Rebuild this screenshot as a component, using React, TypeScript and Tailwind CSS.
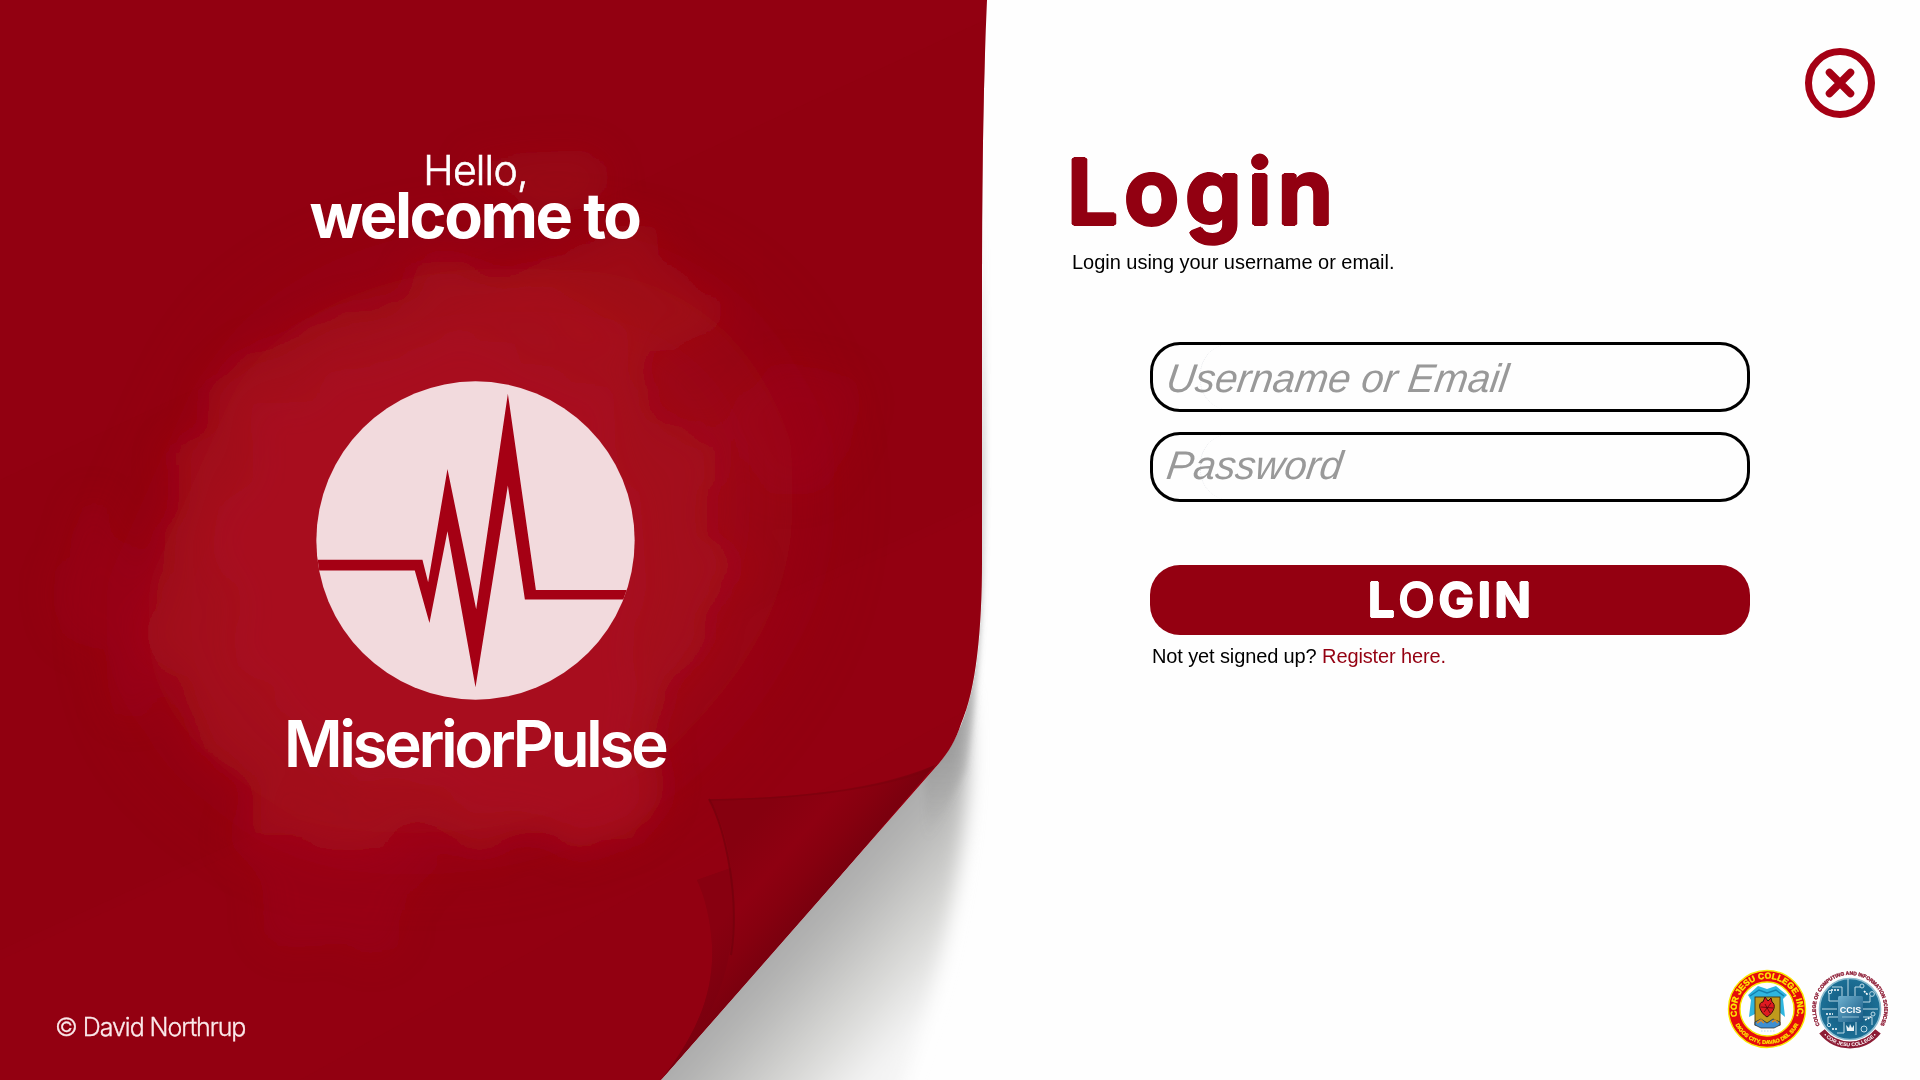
import React from "react";

function Backdrop() {
  return (
    <svg className="absolute inset-0 h-full w-full" viewBox="0 0 1920 1080" aria-hidden="true">
      <defs>
        <clipPath id="sheet">
          <path d="M0 0H987C983 90 982 190 982 300V560C982 630 976 690 961 724C955 742 947 755 935 768L661 1080H0Z" />
        </clipPath>
        <clipPath id="page">
          <path d="M987 0H1920V1080H661L935 768C975 725 982 650 982 560V300Z" />
        </clipPath>
        <filter id="b3" x="-50%" y="-50%" width="200%" height="200%"><feGaussianBlur stdDeviation="3" /></filter>
        <filter id="b10" x="-50%" y="-50%" width="200%" height="200%"><feGaussianBlur stdDeviation="9" /></filter>
        <filter id="cloud" x="-30%" y="-30%" width="160%" height="160%">
          <feTurbulence type="fractalNoise" baseFrequency="0.008" numOctaves="3" seed="7" result="n" />
          <feDisplacementMap in="SourceGraphic" in2="n" scale="120" xChannelSelector="R" yChannelSelector="G" />
          <feGaussianBlur stdDeviation="17" />
        </filter>
        <filter id="b45" x="-50%" y="-50%" width="200%" height="200%"><feGaussianBlur stdDeviation="45" /></filter>
        <linearGradient id="shade" gradientUnits="userSpaceOnUse" x1="798" y1="924" x2="916" y2="1028">
          <stop offset="0" stopColor="#acacac" />
          <stop offset="0.2" stopColor="#b8b8b7" />
          <stop offset="0.6" stopColor="#d6d6d4" />
          <stop offset="1" stopColor="#f4f4f4" />
        </linearGradient>
        <linearGradient id="fold" gradientUnits="userSpaceOnUse" x1="722" y1="858" x2="798" y2="924">
          <stop offset="0" stopColor="#86000f" />
          <stop offset="0.45" stopColor="#8e0011" />
          <stop offset="0.72" stopColor="#86000f" />
          <stop offset="1" stopColor="#7a000e" />
        </linearGradient>
        <linearGradient id="fold2" gradientUnits="userSpaceOnUse" x1="690" y1="960" x2="740" y2="1000">
          <stop offset="0" stopColor="#880010" />
          <stop offset="1" stopColor="#78000e" />
        </linearGradient>
        <linearGradient id="edge" gradientUnits="userSpaceOnUse" x1="0" y1="200" x2="0" y2="840">
          <stop offset="0" stopColor="#777" stopOpacity="0" />
          <stop offset="0.4" stopColor="#777" stopOpacity="0.5" />
          <stop offset="0.75" stopColor="#777" stopOpacity="0.5" />
          <stop offset="1" stopColor="#777" stopOpacity="0" />
        </linearGradient>
      </defs>
      <rect width="1920" height="1080" fill="#fefefe" />
      <g clipPath="url(#page)">
        <path d="M600 1120L880 745L948 700L966 690C974 780 962 860 948 925C935 990 918 1040 890 1120Z" fill="url(#shade)" filter="url(#b10)" />
        <path d="M981 200H984C985 450 988 640 966 770L925 850V760C985 700 981 600 981 200Z" fill="url(#edge)" filter="url(#b3)" />
      </g>
      <g clipPath="url(#sheet)">
        <rect width="1000" height="1080" fill="#920011" />
        <path d="M0 480L985 20V500L0 950Z" fill="#8f000f" opacity="0.5" />
        <path d="M0 960L985 510V700L300 1080H0Z" fill="#960012" opacity="0.35" />
        <path d="M230 400C280 300 420 260 530 270C690 260 760 350 790 440C810 600 740 680 660 760C560 830 420 850 300 820C200 760 130 700 150 580Z" fill="#a60f1a" opacity="0.55" filter="url(#b45)" />
        <g fill="#ac161f" filter="url(#cloud)">
          <path d="M190 400C250 340 350 280 430 285C560 270 650 310 660 390C700 440 750 480 740 570C700 610 680 680 670 770C600 850 500 870 390 850C330 870 260 850 250 790C180 730 130 700 145 640C180 590 150 560 160 500Z" opacity="0.5" />
          <path d="M250 430C330 350 450 340 540 370C620 400 640 470 640 540C630 640 650 740 620 830C500 860 330 800 280 700C200 640 210 520 250 430Z" opacity="0.5" />
          <path d="M600 235C650 220 700 240 715 300C700 340 660 320 650 360L450 330Z" opacity="0.35" />
          <ellipse cx="550" cy="175" rx="60" ry="32" opacity="0.25" />
          <ellipse cx="115" cy="620" rx="45" ry="110" opacity="0.18" />
          <ellipse cx="790" cy="430" rx="70" ry="50" opacity="0.18" />
          <path d="M240 800L440 840L370 960L290 970Z" opacity="0.2" />
        </g>
        <path d="M709 799C770 799 870 793 935 765L790 935L661 1080C700 1030 714 990 712 945C710 915 704 895 697 880L731 868C727 840 720 815 709 799Z" fill="url(#fold)" />
        <path d="M697 880L731 868C735 900 735 930 728 960C722 990 712 1010 690 1047L661 1080C700 1030 714 990 712 945C710 915 704 895 697 880Z" fill="url(#fold2)" />
        <path d="M709 799C726 830 740 900 731 955" fill="none" stroke="#70000c" strokeWidth="2" opacity="0.65" />
        <path d="M709 800C780 799 870 793 934 768" fill="none" stroke="#79000d" strokeWidth="1.5" opacity="0.6" />
      </g>
    </svg>
  );
}

function PulseMark() {
  return (
    <svg className="h-[319px] w-[319px]" viewBox="168 62 956 956" aria-hidden="true">
      <defs><clipPath id="disc"><circle cx="646" cy="540" r="477" /></clipPath></defs>
      <circle cx="646" cy="540" r="477" fill="#f2dadd" />
      <path clipPath="url(#disc)" fill="#a50014" d="M160 598H487L504 665L562 326L648 746L743 100L827 688H1130V717H794L743 375L646 980L562 512L508 787L464 630H160Z" />
    </svg>
  );
}

function CollegeSeal() {
  return (
    <svg className="h-[80px] w-[80px]" viewBox="-40 -40 80 80" aria-label="Cor Jesu College">
      <defs>
        <path id="sealTop" d="M-27.5 13A30.4 30.4 0 1 1 27.5 13" />
        <path id="sealBottom" d="M-34.5 6A35 35 0 0 0 34.5 6" />
      </defs>
      <circle r="38.5" fill="#e60c0c" stroke="#f8e900" strokeWidth="1.4" />
      <circle r="27" fill="#fefefe" stroke="#f8e900" strokeWidth="1.4" />
      <text fontFamily="Liberation Sans, sans-serif" fontWeight="700" fontSize="8.6" fill="#fdf000" stroke="#fdf000" strokeWidth="0.3">
        <textPath href="#sealTop" startOffset="50%" textAnchor="middle">COR JESU COLLEGE, INC.</textPath>
      </text>
      <text fontFamily="Liberation Sans, sans-serif" fontWeight="700" fontSize="5.4" fill="#fdf000" stroke="#fdf000" strokeWidth="0.2">
        <textPath href="#sealBottom" startOffset="50%" textAnchor="middle">DIGOS CITY, DAVAO DEL SUR</textPath>
      </text>
      <path d="M-19 -14L-9 -23L0 -20L9 -23L20 -14L16 -10L18 8L12 3V-12H-12V5L-18 8L-16 -9Z" fill="#2fb5df" />
      <path d="M-17 -13L-8 -19L0 -16L9 -19L17 -13" fill="none" stroke="#147fae" strokeWidth="1.4" />
      <rect x="-12" y="-12" width="25" height="28" fill="#c09a1c" stroke="#433611" strokeWidth="0.9" />
      <path d="M0 8C-9 2 -9 -7 -4 -7L-2 -12L1 -8L4 -11L5 -7C9 -5 8 3 0 8Z" fill="#df1920" stroke="#3a0b0b" strokeWidth="1" />
      <path d="M-6 -2L6 -1M-2 -5L3 4M4 -6L-3 3" stroke="#5b0a0a" strokeWidth="0.9" />
      <path d="M-12 16V13L-6 10L0 14L6 10L13 13V16L7 19H-6Z" fill="#3f8fd2" stroke="#242424" strokeWidth="0.7" />
      <path d="M-10 14L-6 11L-3 14M5 13L8 11L11 14" fill="none" stroke="#d98822" strokeWidth="1.7" />
      <path d="M-6 22H8" stroke="#b9d9ea" strokeWidth="1.2" strokeDasharray="1.5 1.5" />
    </svg>
  );
}

function ComputingSeal() {
  return (
    <svg className="h-[80px] w-[80px] overflow-visible" viewBox="-40 -40 80 80" aria-label="College of Computing and Information Sciences">
      <defs>
        <path id="ccTop" d="M-28.5 19A34.2 34.2 0 1 1 28.5 19" />
        <path id="ccBottom" d="M-29 23.5A37.3 37.3 0 0 0 29 23.5" />
        <radialGradient id="ccDisc"><stop offset="0" stopColor="#11557b" /><stop offset="1" stopColor="#1c7096" /></radialGradient>
        <linearGradient id="chip" x1="0" y1="0" x2="1" y2="1"><stop offset="0" stopColor="#6fb0cf" /><stop offset="1" stopColor="#155a84" /></linearGradient>
      </defs>
      <circle r="30.5" fill="url(#ccDisc)" stroke="#8dbdd0" strokeWidth="1.6" />
      <text fontFamily="Liberation Sans, sans-serif" fontWeight="700" fontSize="5" fill="#8d1c35" stroke="#8d1c35" strokeWidth="0.35">
        <textPath href="#ccTop" startOffset="50%" textAnchor="middle">COLLEGE OF COMPUTING AND INFORMATION SCIENCES</textPath>
      </text>
      <g fill="none" stroke="#cfe6ef" strokeWidth="0.9">
        <path d="M-2 -13V-30M5 -13V-22H10M-8 -13V-22H-18M-12 -8H-21V-16M-13 0H-28M-12 8H-22V14M-6 13V24H-13M6 13V26M12 8H22V16M13 0H28M12 -7H20V-13" />
        <circle cx="12" cy="-23" r="2" /><circle cx="-20" cy="-17" r="1.7" /><circle cx="22" cy="-15" r="2.4" />
        <circle cx="-21" cy="16" r="1.7" /><circle cx="14" cy="20" r="3" /><circle cx="23" cy="5" r="2" />
      </g>
      <path d="M-19 -19H-11M14 -18L18 -14M-24 5H-17M15 11L21 8M-18 20H-12" stroke="#fff" strokeWidth="1.7" strokeDasharray="2 1" />
      <path d="M-4 16L-1 19L0 15L2 19L4 16V22H-3Z" fill="#e9f3f7" />
      <rect x="-12" y="-13" width="25" height="26" rx="1.5" fill="url(#chip)" />
      <text x="0.5" y="4" textAnchor="middle" fontFamily="Liberation Sans, sans-serif" fontSize="9" fontWeight="700" fill="#fff">CCIS</text>
      <path d="M-8 8H9" stroke="#a8d0e0" strokeWidth="0.8" />
      <path d="M-28 22.4A35.8 35.8 0 0 0 28 22.4" fill="none" stroke="#8d1c35" strokeWidth="7" />
      <text fontFamily="Liberation Sans, sans-serif" fontWeight="700" fontSize="5.1" fill="#fff">
        <textPath href="#ccBottom" startOffset="50%" textAnchor="middle">• COR JESU COLLEGE •</textPath>
      </text>
    </svg>
  );
}

function Field({ label, nudge, type }: { label: string; nudge: string; type: string }) {
  return (
    <div className="relative h-[70px] w-[600px] overflow-hidden rounded-[30px] border-[3px] border-black bg-[#fefefe]">
      <div className="absolute -top-px left-[47px] h-[66px] w-[60px] rounded-l-[30px] border-l border-dotted border-gray-200" />
      <input
        type={type}
        placeholder={label}
        className={
          "absolute inset-0 w-full origin-left -skew-x-8 bg-transparent pl-[14px] font-['Liberation_Sans',Arial,sans-serif] text-[40px] italic leading-[64px] tracking-[-0.05px] outline-none placeholder:text-[#999999] placeholder:opacity-100 " + nudge
        }
      />
    </div>
  );
}

export default function App() {
  return (
    <main className="relative flex h-[1080px] w-[1920px] overflow-hidden bg-[#fefefe] font-[Inter,sans-serif]">
      <Backdrop />
      <div className="pointer-events-none absolute left-[655px] top-[714px] whitespace-nowrap text-[105px] font-semibold leading-[128px] tracking-[-5px] text-white opacity-40 [mask-image:linear-gradient(to_right,transparent_310px,black_400px)]">
        MiseriorPulse
      </div>

      <section className="relative flex w-[949px] shrink-0 flex-col items-center pt-[145px] text-white">
        <p className="h-[42px] pl-[2px] text-[41px] font-light leading-[50px] tracking-[-0.8px] [-webkit-text-stroke:0.6px_white]">Hello,</p>
        <h2 className="mt-[-3px] h-[60px] whitespace-nowrap text-[63px] font-bold leading-[62px] tracking-[-2.4px]">welcome to</h2>
        <div className="mt-[137px] pl-[2px]"><PulseMark /></div>
        <h1 className="mt-[10px] whitespace-nowrap text-[64px] font-semibold leading-[68px] tracking-[-3.5px]">MiseriorPulse</h1>
        <p className="mb-[37px] mt-auto self-start pl-[55px] text-[25px] font-light leading-[32px] tracking-[-1.05px] text-[#fbe9eb] [-webkit-text-stroke:0.3px_#fbe9eb]">© David Northrup</p>
      </section>

      <section className="relative flex flex-1 flex-col pl-[2px]">
        <button aria-label="Close" className="absolute left-[856px] top-[48px] h-[70px] w-[70px] rounded-full border-[7px] border-[#a50014]">
          <svg className="h-full w-full" viewBox="0 0 56 56" aria-hidden="true">
            <path d="M17.5 17.5L38.5 38.5M38.5 17.5L17.5 38.5" stroke="#a50014" strokeWidth="7.5" strokeLinecap="round" />
          </svg>
        </button>
        <h1 className="ml-[116px] mt-[137px] h-[110px] whitespace-nowrap text-[90px] font-semibold leading-[110px] tracking-[6.3px] text-[#920011] [text-shadow:2px_0_#920011,-2px_0_#920011,0_2px_#920011,0_-2px_#920011,1.4px_1.4px_#920011,-1.4px_1.4px_#920011,1.4px_-1.4px_#920011,-1.4px_-1.4px_#920011]">
          Login
        </h1>
        <p className="ml-[121px] mt-[3px] font-['Liberation_Sans',Arial,sans-serif] text-[20px] leading-[24px] tracking-[-0.03px] text-black">Login using your username or email.</p>
        <div className="ml-[199px] mt-[68px] flex w-[600px] flex-col">
          <Field label="Username or Email" type="text" nudge="pt-[2px]" />
          <div className="h-5" />
          <Field label="Password" type="password" nudge="pb-[4px]" />
          <button className="mt-[63px] flex h-[70px] items-center justify-center rounded-[30px] bg-[#940011] pl-[2px] text-[48px] font-bold tracking-[3.3px] text-white [text-shadow:0.8px_0_#fff,-0.8px_0_#fff,0_0.8px_#fff,0_-0.8px_#fff]">
            <span>L<span className="font-medium">O</span>GIN</span>
          </button>
          <p className="mt-[9px] pl-[2px] font-['Liberation_Sans',Arial,sans-serif] text-[20px] leading-[24px] tracking-[-0.12px] text-black">
            Not yet signed up? <a className="text-[#940011]">Register here.</a>
          </p>
        </div>
        <div className="mb-[31px] ml-[776px] mt-auto flex gap-[3px]">
          <CollegeSeal />
          <ComputingSeal />
        </div>
      </section>
    </main>
  );
}
